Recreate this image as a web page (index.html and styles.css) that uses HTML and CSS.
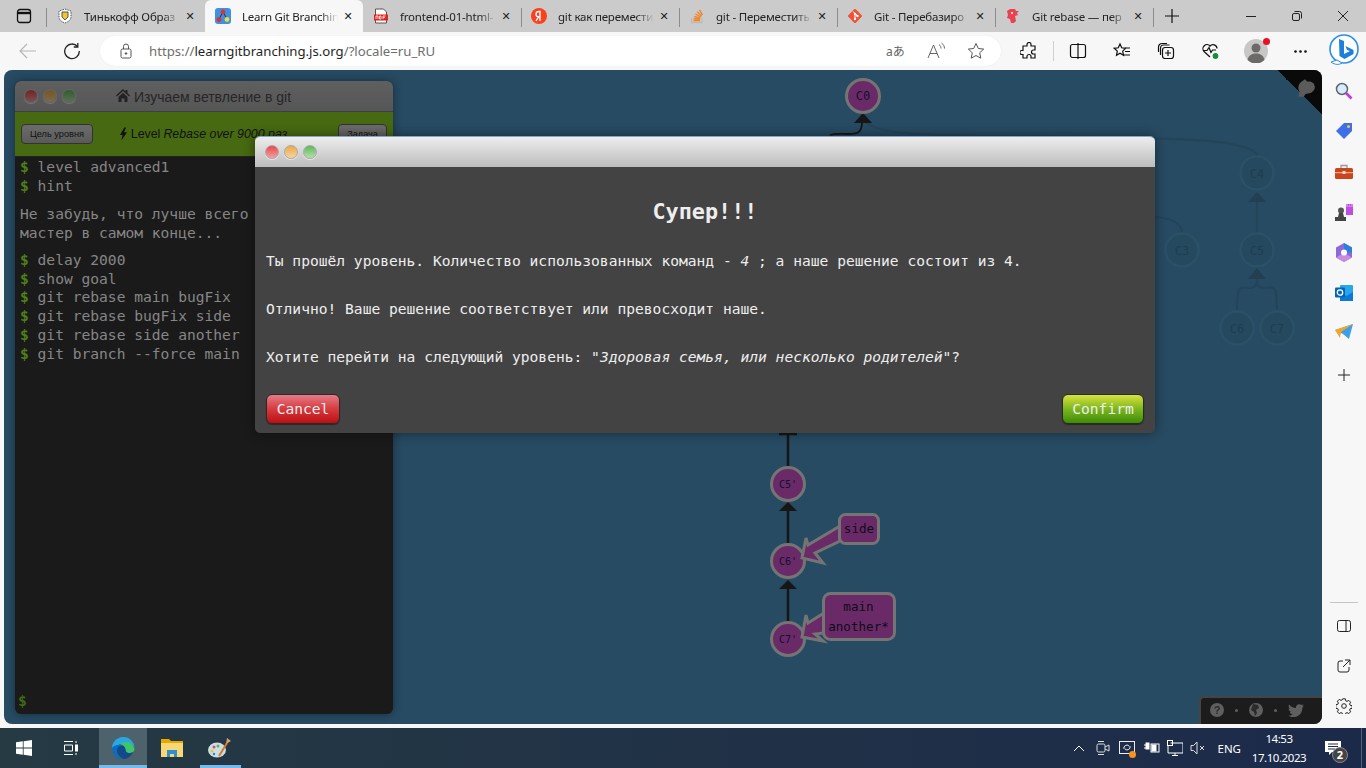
FILE: index.html
```html
<!DOCTYPE html>
<html lang="ru">
<head>
    <meta charset="UTF-8">
    <title>Learn Git Branching</title>
    <link rel="stylesheet" href="styles.css">
</head>
<body>
<div class="tabstrip">
    <div class="tab-actions">
        <svg width="16" height="16" viewBox="0 0 16 16" fill="none" stroke="#111" stroke-width="1.3"><rect x="1.5" y="1.5" width="13" height="13" rx="2.5"/><path d="M1.5 5h13" stroke-width="2.4"/></svg>
    </div>
    <div class="tab">
        <svg class="favicon" viewBox="0 0 16 16"><path d="M8 1l6 2v6c0 3-3 5-6 6-3-1-6-3-6-6V3z" fill="#fff" stroke="#555" stroke-dasharray="1.5 1"/><path d="M5 4h6v5l-3 3-3-3z" fill="#e8c93a" stroke="#333" stroke-width=".8"/></svg>
        <span class="tab-title">Тинькофф Образ</span>
        <span class="tab-close">✕</span>
    </div>
    <div class="tab active">
        <svg class="favicon" viewBox="0 0 16 16"><rect width="16" height="16" rx="3" fill="#3c91e6"/><path d="M8 4L4 11M8 4l4 7" stroke="#234" stroke-width="1"/><circle cx="8" cy="4" r="2.4" fill="#e0302c"/><circle cx="4" cy="11.5" r="2.4" fill="#e0302c"/><circle cx="12" cy="11.5" r="2.4" fill="#f1d93a"/></svg>
        <span class="tab-title">Learn Git Branchin</span>
        <span class="tab-close">✕</span>
    </div>
    <div class="tab">
        <svg class="favicon" viewBox="0 0 16 16"><path d="M2.5 1h8l3 3v11h-11z" fill="#fff" stroke="#555"/><rect x="1" y="6.5" width="14" height="6" fill="#e2231a"/><path d="M3 8h2v3M3 8v3M6.5 8v3h1.5V8zM10 8v3M10 8h2.500M10 9.500h2" stroke="#fff" stroke-width=".8" fill="none"/></svg>
        <span class="tab-title">frontend-01-html-</span>
        <span class="tab-close">✕</span>
        <i class="tab-sep"></i>
    </div>
    <div class="tab">
        <svg class="favicon" viewBox="0 0 16 16"><circle cx="8" cy="8" r="8" fill="#fc3f1d"/><path d="M9 13V3.500H8C6 3.500 5 4.600 5 6.200S6 8.800 8 8.800h1M7.500 8.800L5 13" stroke="#fff" stroke-width="1.400" fill="none"/></svg>
        <span class="tab-title">git как перемести</span>
        <span class="tab-close">✕</span>
        <i class="tab-sep"></i>
    </div>
    <div class="tab">
        <svg class="favicon" viewBox="0 0 16 16"><path d="M2.500 10v4.500h10.500V10" fill="none" stroke="#bcbbbb" stroke-width="1.300"/><path d="M4.500 12.500h6.500M4.700 10.500l6.300.7M5.300 8.300l6 1.800M6.500 6l5.300 3M8.300 3.800l4.300 4.300M10.500 1.800l3 5" stroke="#f48024" stroke-width="1.300"/></svg>
        <span class="tab-title">git - Переместить</span>
        <span class="tab-close">✕</span>
        <i class="tab-sep"></i>
    </div>
    <div class="tab">
        <svg class="favicon" viewBox="0 0 16 16"><rect x="2.700" y="2.700" width="10.600" height="10.600" rx="1.200" transform="rotate(45 8 8)" fill="#f05133"/><path d="M6 3.500l4.500 4.500M8 6v5M8 6l2.500 2" stroke="#fff" stroke-width="1"/><circle cx="8" cy="11" r="1.200" fill="#fff"/><circle cx="10.500" cy="8" r="1.200" fill="#fff"/><circle cx="8" cy="6" r="1.200" fill="#fff"/></svg>
        <span class="tab-title">Git - Перебазиро</span>
        <span class="tab-close">✕</span>
        <i class="tab-sep"></i>
    </div>
    <div class="tab">
        <svg class="favicon" viewBox="0 0 16 16"><path d="M2 3l3-2h5l1 2h3l-2 2 1 2-3 1 1 5-2 2H6l-1-4-3-1 1-3z" fill="#e8434f"/><circle cx="7" cy="5" r="1" fill="#fff"/></svg>
        <span class="tab-title">Git rebase — пер</span>
        <span class="tab-close">✕</span>
        <i class="tab-sep"></i>
    </div>
    <div class="tab-new">
        <svg width="16" height="16" viewBox="0 0 16 16" stroke="#111" stroke-width="1.200"><path d="M8 1v14M1 8h14"/></svg>
    </div>
    <div class="win-buttons">
        <svg width="12" height="12" viewBox="0 0 12 12" stroke="#222"><path d="M1 6.500h10"/></svg>
        <svg width="12" height="12" viewBox="0 0 12 12" stroke="#222" fill="none"><rect x="1.500" y="3.500" width="7" height="7" rx="1.500"/><path d="M3.500 1.500h5a2 2 0 0 1 2 2v5"/></svg>
        <svg width="12" height="12" viewBox="0 0 12 12" stroke="#222"><path d="M1 1l10 10M11 1L1 11"/></svg>
    </div>
</div>

<div class="toolbar">
    <svg class="nav-back" width="18" height="16" viewBox="0 0 18 16" fill="none" stroke="#b5b5b5" stroke-width="1.200"><path d="M17 8H1M8 1L1 8l7 7"/></svg>
    <svg class="nav-reload" width="18" height="18" viewBox="0 0 18 18" fill="none" stroke="#222" stroke-width="1.300"><path d="M14.500 4.500A7.300 7.300 0 1 0 16.300 9"/><path d="M14.800 1v4h-4"/></svg>
    <div class="address">
        <svg class="lock" width="12" height="16" viewBox="0 0 12 16" fill="none" stroke="#555"><rect x="1" y="6" width="10" height="9" rx="1.500"/><path d="M3.500 6V3.500a2.500 2.500 0 0 1 5 0V6"/><circle cx="6" cy="10.500" r=".8" fill="#555"/></svg>
        <span class="url"><span class="url-dim">https://</span>learngitbranching.js.org<span class="url-dim">/?locale=ru_RU</span></span>
        <span class="translate">aあ</span>
        <svg class="read" width="20" height="18" viewBox="0 0 20 18" fill="none" stroke="#666"><path d="M1 16L6.500 3 12 16M3 11.500h7"/><path d="M12 2.500c1.500 1 2 2.500 2 4M14.500 1c2 1.500 3 3.500 3 5.500"/></svg>
        <svg class="star" width="18" height="18" viewBox="0 0 18 18" fill="none" stroke="#555"><path d="M9 1.500l2.300 5 5.400.6-4 3.700 1.100 5.400L9 13.500l-4.800 2.700 1.100-5.400-4-3.700 5.400-.6z"/></svg>
    </div>
    <div class="tool-icons">
        <svg width="18" height="18" viewBox="0 0 18 18" fill="none" stroke="#111" stroke-width="1.200"><path d="M7 2.500a2 2 0 0 1 4 0V4h4v4h-1.500a2 2 0 0 0 0 4H15v4h-4v-1.500a2 2 0 0 0-4 0V16H3v-3.500H1.800a2 2 0 0 1 0-4H3V4h4z"/></svg>
        <i class="tool-sep"></i>
        <svg width="18" height="18" viewBox="0 0 18 18" fill="none" stroke="#111" stroke-width="1.200"><rect x="1.500" y="2.500" width="15" height="13" rx="2"/><path d="M9 1v16"/></svg>
        <svg width="18" height="18" viewBox="0 0 18 18" fill="none" stroke="#111" stroke-width="1.200"><path d="M7 2l1.700 3.800 4 .5-3 2.800.8 4.200L7 11.200 3.500 13.300l.8-4.200-3-2.800 4-.5zM12 6h5M12 9.500h5M11 13h6"/></svg>
        <svg width="18" height="18" viewBox="0 0 18 18" fill="none" stroke="#111" stroke-width="1.200"><rect x="5.500" y="5.500" width="11" height="11" rx="2.500"/><path d="M3.500 13V6a3 3 0 0 1 3-3h6M1.500 10V5a3.500 3.500 0 0 1 3.500-3.500h5M11 8v6M8 11h6"/></svg>
        <svg width="20" height="20" viewBox="0 0 20 20" fill="none" stroke="#111" stroke-width="1.200"><path d="M9 16L3 10.500a4 4 0 0 1 6-5.500 4 4 0 0 1 7 2.500M2 9.500h4l2-3 2 5 1.500-2.500H15"/><circle cx="14.500" cy="15" r="3.500" fill="#1c8a3c" stroke="#fff"/></svg>
        <span class="avatar"><svg width="24" height="24" viewBox="0 0 24 24"><circle cx="12" cy="12" r="12" fill="#c9c7c5"/><circle cx="12" cy="9" r="4.500" fill="#6b6a68"/><path d="M3.500 21c1-5 4.500-6.500 8.500-6.500s7.500 1.500 8.500 6.500a12 12 0 0 1-17 0z" fill="#6b6a68"/></svg><i class="avatar-dot"></i></span>
        <svg width="13" height="3" viewBox="0 0 13 3" fill="#111"><circle cx="1.500" cy="1.500" r="1.300"/><circle cx="6.500" cy="1.500" r="1.300"/><circle cx="11.500" cy="1.500" r="1.300"/></svg>
        <svg class="bing" width="32" height="34" viewBox="0 0 32 34"><circle cx="16" cy="15" r="14" fill="#fff" stroke="#2a8fe8" stroke-width="1.600"/><path d="M3 28c4 3 8 3 11 1l-5-3z" fill="#fff" stroke="#2a8fe8"/><path d="M11 5l5 2v13l6-3-3-1-1.500-4 8 4v4l-9 5-5-3z" fill="#1c7fdc"/></svg>
    </div>
</div>

<div class="main-row">
    <div class="canvas">
        <svg class="graph" width="1318" height="654" viewBox="4 70 1318 654">
            <g class="edges-dim">
                <path d="M866 122c10 10 40 12 80 13 110 2 250 2 280 8 25 5 31 8 31 13"/>
                <path d="M1150 217c22 0 32 6 32 17"/>
                <path d="M1257 233v-32"/>
                <path d="M1237 311c0-30 4-23 12-23 6 0 8-2 8-10 0 8 2 10 8 10 8 0 12-7 12 23" fill="none"/>
            </g>
            <path class="arrow-dim" d="M1257 192l9 10h-18z"/>
            <path class="arrow-dim" d="M1257 268l9 11h-18z"/>
            <g class="node-dim">
                <circle cx="1257" cy="173" r="16.500"/><circle cx="1257" cy="250" r="16.500"/><circle cx="1182" cy="250" r="16.500"/><circle cx="1237" cy="328" r="16.500"/><circle cx="1277" cy="328" r="16.500"/>
            </g>
            <g class="label-dim">
                <text x="1257" y="178">C4</text><text x="1257" y="255">C5</text><text x="1182" y="255">C3</text><text x="1237" y="333">C6</text><text x="1277" y="333">C7</text>
            </g>
            <g class="edges">
                <path class="edge-curve" d="M862 122c0 12-6 12-14 12-8 0-13-1-18 1"/>
                <path d="M788 434v34M788 510v35M788 588v35"/>
                <path class="edge-cap" d="M779 434h18"/>
            </g>
            <path class="arrow" d="M863 113l9 10h-18z"/>
            <path class="arrow" d="M788 502l9 9h-18z"/>
            <path class="arrow" d="M788 580l9 9h-18z"/>
            <g class="node">
                <circle cx="863" cy="96" r="16.500"/><circle cx="788" cy="484" r="16.500"/><circle cx="788" cy="561" r="16.500"/><circle cx="788" cy="639" r="16.500"/>
            </g>
            <g class="label">
                <text x="863" y="100">C0</text><text x="788" y="488">C5'</text><text x="788" y="565">C6'</text><text x="788" y="643">C7'</text>
            </g>
            <path class="branch-arrow" d="M840 526L808 545 806 538 802 558 823 563 815 553 840 541z"/>
            <path class="branch-arrow" d="M824 613L808 623 806 615 802 637 823 641 815 634 824 633z"/>
            <rect class="branch-box" x="839.500" y="514.500" width="39" height="29" rx="6"/>
            <rect class="branch-box" x="823.500" y="593.500" width="71" height="46" rx="7"/>
            <g class="branch-text">
                <text x="859" y="533">side</text><text x="858.500" y="611">main</text><text x="858.500" y="631">another*</text>
            </g>
        </svg>

        <div class="terminal">
            <div class="term-head">
                <span class="lights lights-dim"><i class="light red"></i><i class="light orange"></i><i class="light green"></i></span>
                <span class="term-title">
                    <svg width="14" height="13" viewBox="0 0 14 13" fill="#222"><path d="M7 0L0 6.500l1 1L7 2l6 5.500 1-1-2.500-2.300V1h-2v1.400z"/><path d="M2.500 8L7 3.800 11.500 8v5H8.500V9.500h-3V13h-3z"/></svg>
                    Изучаем ветвление в git
                </span>
            </div>
            <div class="term-level">
                <span class="level-btn">Цель уровня</span>
                <span class="level-name">
                    <svg width="7" height="14" viewBox="0 0 8 15" fill="#111"><path d="M5 0L0 8.500h3L1.500 15 8 5.500H4.500L7 0z"/></svg>
                    Level <em>Rebase over 9000 раз</em>
                </span>
                <span class="level-btn">Задача</span>
            </div>
            <div class="term-body">
                <div class="term-line"><b>$</b> level advanced1</div>
                <div class="term-line"><b>$</b> hint</div>
                <div class="term-note">Не забудь, что лучше всего сдвигать<br>мастер в самом конце...</div>
                <div class="term-line"><b>$</b> delay 2000</div>
                <div class="term-line"><b>$</b> show goal</div>
                <div class="term-line"><b>$</b> git rebase main bugFix</div>
                <div class="term-line"><b>$</b> git rebase bugFix side</div>
                <div class="term-line"><b>$</b> git rebase side another</div>
                <div class="term-line"><b>$</b> git branch --force main</div>
                <div class="term-prompt"><b>$</b></div>
            </div>
        </div>

        <div class="corner">
            <svg width="22" height="22" viewBox="0 0 20 20" fill="#5b5b5b"><path d="M4 18l1-5c-2-3-1-7 2-9l3-2 2 2h3l3 2 1 3c0 3-3 6-7 6l-2 1-1 2z"/></svg>
        </div>

        <div class="modal">
            <div class="modal-head">
                <span class="lights"><i class="light red"></i><i class="light orange"></i><i class="light green"></i></span>
            </div>
            <div class="modal-body">
                <h2>Супер!!!</h2>
                <p>Ты прошёл уровень. Количество использованных команд - <i>4</i> ; а наше решение состоит из 4.</p>
                <p>Отлично! Ваше решение соответствует или превосходит наше.</p>
                <p>Хотите перейти на следующий уровень: <i>"Здоровая семья, или несколько родителей"</i>?</p>
                <div class="modal-actions">
                    <span class="btn btn-cancel">Cancel</span>
                    <span class="btn btn-confirm">Confirm</span>
                </div>
            </div>
        </div>

        <div class="helper">
            <svg width="14" height="14" viewBox="0 0 14 14"><circle cx="7" cy="7" r="7" fill="#5f5f5f"/><text x="7" y="11" class="helper-q">?</text></svg>
            <i class="helper-dot"></i>
            <svg width="14" height="14" viewBox="0 0 14 14"><circle cx="7" cy="7" r="7" fill="#5f5f5f"/><path d="M4 1l5 1 1 3-3 2 1 3-2 3-1-4-3-2z" fill="#2b2b2b"/></svg>
            <i class="helper-dot"></i>
            <svg width="16" height="13" viewBox="0 0 16 13" fill="#5f5f5f"><path d="M16 1.500l-1.800.5 1.300-1.700-2 .8a3.300 3.300 0 0 0-5.500 3C5.200 4 2.800 2.700 1.100.6c-.9 1.500-.4 3.400 1 4.400l-1.500-.4c0 1.600 1.100 3 2.600 3.300l-1.500.1c.4 1.300 1.600 2.200 3 2.300A6.600 6.600 0 0 1 0 11.600 9.300 9.300 0 0 0 14.400 3.400z"/></svg>
        </div>
    </div>

    <div class="sidebar">
        <div class="side-top">
            <svg width="18" height="18" viewBox="0 0 18 18"><circle cx="7" cy="7" r="5.500" fill="#d6ecfa" stroke="#5c6670" stroke-width="1.500"/><path d="M11 11l5.500 5.500" stroke="#c238d8" stroke-width="2.600"/></svg>
            <svg width="18" height="18" viewBox="0 0 18 18"><path d="M9 1h8v8l-8 8-8-8z" fill="#3f6fe8"/><circle cx="13.500" cy="4.500" r="1.500" fill="#f2c83a"/></svg>
            <svg width="18" height="16" viewBox="0 0 18 16"><path d="M6 4V1.500h6V4" fill="none" stroke="#999" stroke-width="1.300"/><rect y="4" width="18" height="11" rx="1.500" fill="#c9461c"/><rect y="8" width="18" height="1.300" fill="#f0a080"/><rect x="7.500" y="7" width="3" height="3" fill="#ddd"/></svg>
            <svg width="18" height="18" viewBox="0 0 18 18"><rect x="11" y="1" width="7" height="11" fill="#c04ce8"/><path d="M11 1h2v2h1V1h1v2h1V1h2v3h-7z" fill="#d77cf2"/><circle cx="6" cy="7.500" r="3" fill="#555"/><path d="M4 10h4l1 4h2v4H0v-4h3z" fill="#444"/></svg>
            <svg width="18" height="19" viewBox="0 0 18 19"><path d="M9 0l8 4.500v10L9 19l-8-4.500v-10z" fill="#8a6ad8"/><path d="M9 0l8 4.500v5H9z" fill="#2b7fd8"/><path d="M1 14.500L9 10l8 4.500L9 19z" fill="#c98ae0"/><circle cx="9" cy="9.500" r="3" fill="#fff"/></svg>
            <svg width="18" height="18" viewBox="0 0 18 18"><rect x="5" y="1" width="13" height="16" rx="1" fill="#28a8ea"/><path d="M5 8l6.500 4L18 8v9H5z" fill="#0f78d4"/><rect y="3.500" width="10" height="10" rx="1" fill="#0364b8"/><circle cx="5" cy="8.500" r="2.700" fill="none" stroke="#fff" stroke-width="1.300"/></svg>
            <svg class="side-send" width="18" height="15" viewBox="0 0 18 15"><path d="M0 6l18-6-4 15-6-5z" fill="#3c9fe8"/><path d="M0 6l18-6L6 8l-1 6z" fill="#f0a52b"/></svg>
            <svg class="side-plus" width="12" height="12" viewBox="0 0 12 12" stroke="#222"><path d="M6 0v12M0 6h12"/></svg>
        </div>
        <div class="side-bottom">
            <i class="side-sep"></i>
            <svg class="side-split" width="14" height="12" viewBox="0 0 14 12" fill="none" stroke="#222"><rect x=".5" y=".5" width="13" height="11" rx="2"/><path d="M9 .5v11"/></svg>
            <svg width="14" height="14" viewBox="0 0 14 14" fill="none" stroke="#222"><path d="M6 2H3a2 2 0 0 0-2 2v7a2 2 0 0 0 2 2h7a2 2 0 0 0 2-2V8M8 1h5v5M13 1L6 8"/></svg>
            <svg width="16" height="16" viewBox="0 0 16 16" fill="none" stroke="#222"><circle cx="8" cy="8" r="2.300"/><path d="M6.700 .8h2.600l.4 2 1.300.6 1.800-1 1.800 1.800-1 1.800.6 1.300 2 .4v2.600l-2 .4-.6 1.300 1 1.800-1.800 1.800-1.800-1-1.300.6-.4 2H6.700l-.4-2-1.300-.6-1.800 1-1.800-1.800 1-1.800-.6-1.300-2-.4V6.700l2-.4.6-1.300-1-1.800 1.800-1.800 1.800 1 1.300-.6z"/></svg>
        </div>
    </div>
</div>

<div class="taskbar">
    <div class="task-left">
        <span class="task-item"><svg width="16" height="16" viewBox="0 0 16 16" fill="#fff"><path d="M0 2.300l6.800-1v6.300H0zM7.600 1.200L16 0v7.600H7.600zM0 8.400h6.800v6.300l-6.800-1zM7.600 8.400H16V16l-8.400-1.200z"/></svg></span>
        <span class="task-item task-view"><svg width="16" height="16" viewBox="0 0 16 16" fill="none" stroke="#fff"><path d="M1 1.500h9M1 14.500h9M1.500 5h8v6h-8zM13 1v2M13 13v2"/><rect x="12.500" y="5" width="2" height="6" fill="#fff"/></svg></span>
        <span class="task-item edge"><svg width="24" height="24" viewBox="0 0 24 24"><path d="M1 12A11.500 11.500 0 0 1 23.500 13c0 3-3 4.500-6 4-3-.5-3-2-3-3 0-3-3-5-6.500-5S1 11 1 12z" fill="#3ec46d"/><path d="M1 12c0-2 3-4 7-4 2 0 4 1 5 2.500-3-1-7 1-7 5 0 4 4 8 7 8.500C6 24 1 19 1 12z" fill="#0f6cbd"/><path d="M13 10.500c1 1 1.500 2.500 1.500 3.500 0 1 .5 2.500 3 3 1.500 .5 3 0 4.500-1-2 5-7 7.500-9 7-3-.5-7-4.500-7-8.500 0-4 4-6 7.500-4z" fill="#114a8b"/><path d="M12 1A11 11 0 0 1 23.500 13c0-4-4-7-8-7-4 0-7 2-8 3-1.500 0-4 0-6.500 3C1 6 6 1 12 1z" fill="#2aa6e0"/></svg></span>
        <span class="task-item folder"><svg width="22" height="20" viewBox="0 0 22 20"><path d="M0 1h8l2 2h12v16H0z" fill="#e8a800"/><path d="M0 5h22v14H0z" fill="#f8d775"/><path d="M6 19v-7h10v7h-3v-3H9v3z" fill="#2f8fd0"/></svg></span>
        <span class="task-item paint"><svg width="24" height="22" viewBox="0 0 24 22"><ellipse cx="9" cy="13" rx="9" ry="7.500" fill="#c9dfe8"/><circle cx="6" cy="10" r="1.500" fill="#d9534f"/><circle cx="10" cy="9" r="1.500" fill="#6ab04c"/><circle cx="4" cy="14" r="1.500" fill="#f0c419"/><circle cx="6" cy="17" r="1.200" fill="#3c78d8"/><path d="M11 19L19 6" stroke="#d97b1f" stroke-width="2"/><path d="M18 7l1-6 4 3z" fill="#d9a066"/></svg></span>
    </div>
    <div class="tray">
        <svg width="12" height="8" viewBox="0 0 12 8" fill="none" stroke="#fff"><path d="M1 7l5-5 5 5"/></svg>
        <svg class="tray-cam" width="14" height="18" viewBox="0 0 14 18" fill="none" stroke="#ddd"><rect x="1" y="5" width="8" height="8" rx="1.500"/><path d="M9 8l4-2v6l-4-2M2 2.500h6M2 15.500h6"/></svg>
        <span class="tray-update"><svg width="16" height="15" viewBox="0 0 16 15" fill="none" stroke="#eee"><rect x=".5" y=".5" width="15" height="12"/><path d="M5 8a3 3 0 0 1 5-3M11 5a3 3 0 0 1-5 3"/></svg><i class="tray-dot"></i></span>
        <svg width="16" height="12" viewBox="0 0 16 12" fill="none" stroke="#fff"><path d="M0 3h2M0 6h2"/><rect x="2" y="1" width="3" height="6" fill="#fff"/><rect x="7" y="2" width="8" height="8"/><rect x="8" y="3" width="4" height="6" fill="#fff"/></svg>
        <svg class="tray-net" width="16" height="16" viewBox="0 0 16 16" fill="none" stroke="#fff"><path d="M3.500 3H16v10H1V6M8 13v2.500M5 15.500h6"/><rect x=".5" y=".5" width="5" height="5"/></svg>
        <svg class="tray-net" width="15" height="14" viewBox="0 0 15 14" fill="none" stroke="#ddd"><path d="M1 4.500h2.500L7 1v12L3.500 9.500H1zM10 5l4 4M14 5l-4 4"/></svg>
        <span class="tray-lang">ENG</span>
        <span class="tray-clock"><span>14:53</span><span>17.10.2023</span></span>
        <span class="tray-notify">
            <svg width="16" height="15" viewBox="0 0 16 15"><path d="M0 0h16v11H7l-3 3v-3H0z" fill="#fff"/><path d="M3 3h10M3 5.500h10M3 8h7" stroke="#1c2a4a"/></svg>
            <i class="notify-count">2</i>
        </span>
    </div>
</div>
</body>
</html>
```

FILE: styles.css
```css
* {
    box-sizing: border-box;
}

html, body {
    margin: 0;
    height: 100%;
    overflow: hidden;
}

body {
    display: flex;
    flex-direction: column;
    background: #f7f7f7;
    font-family: "Noto Sans", "Open Sans", sans-serif;
}

/* tab strip */
.tabstrip {
    height: 32px;
    display: flex;
    align-items: stretch;
    background: #cbcbcb;
    flex: none;
}

.tab-actions {
    width: 47px;
    display: flex;
    align-items: center;
    padding-left: 16px;
    position: relative;
}

.tab-actions::after {
    content: "";
    position: absolute;
    right: 0;
    top: 8px;
    height: 19px;
    width: 1px;
    background: #8c8c8c;
}

.tab {
    width: 158px;
    display: flex;
    align-items: center;
    padding: 0 7px 0 10px;
    position: relative;
    font-size: 11.500px;
    letter-spacing: -0.2px;
    color: #222;
}

.tab.active {
    background: #f7f7f7;
    border-radius: 6px 6px 0 0;
}

.favicon {
    width: 16px;
    height: 16px;
    flex: none;
    margin-right: 11px;
}

.tab-title {
    flex: 1;
    overflow: hidden;
    white-space: nowrap;
    -webkit-mask-image: linear-gradient(to right, #000 82%, transparent 100%);
    mask-image: linear-gradient(to right, #000 82%, transparent 100%);
}

.tab-close {
    width: 16px;
    margin-left: 2px;
    text-align: center;
    font-size: 11px;
    color: #222;
    font-family: "DejaVu Sans", sans-serif;
}

.tab-sep {
    position: absolute;
    left: 0;
    top: 8px;
    height: 19px;
    width: 1px;
    background: #8c8c8c;
}

.tab:nth-child(4) .tab-sep {
    display: none;
}

.tab-new {
    width: 38px;
    display: flex;
    align-items: center;
    justify-content: center;
    position: relative;
}

.tab-new::before {
    content: "";
    position: absolute;
    left: 0;
    top: 8px;
    height: 19px;
    width: 1px;
    background: #8c8c8c;
}

.win-buttons {
    flex: 1;
    display: flex;
    align-items: center;
    justify-content: flex-end;
    gap: 34px;
    padding-right: 17px;
}

/* toolbar */
.toolbar {
    height: 38px;
    flex: none;
    display: flex;
    align-items: center;
    background: #f7f7f7;
    padding-left: 19px;
}

.nav-reload {
    margin-left: 26px;
}

.address {
    width: 901px;
    height: 30px;
    flex: none;
    margin-left: 19px;
    border-radius: 15px;
    background: #fff;
    display: flex;
    align-items: center;
    padding: 0 16px 0 20px;
    box-shadow: 0 0 1px #ddd;
}

.url {
    margin-left: 17px;
    flex: 1;
    font-size: 13.200px;
    color: #1f1f1f;
}

.url-dim {
    color: #6d6d6d;
}

.translate {
    font-size: 12px;
    color: #666;
    width: 20px;
    white-space: nowrap;
    font-family: "Noto Sans", "Noto Sans CJK JP", sans-serif;
}

.read {
    margin-left: 21px;
}

.star {
    margin-left: 20px;
}

.tool-icons {
    flex: 1;
    display: flex;
    align-items: center;
    gap: 26px;
    padding-left: 19px;
}

.tool-sep {
    width: 1px;
    height: 20px;
    background: #d0d0d0;
    margin: 0 -11px;
}

.avatar {
    position: relative;
    display: flex;
    margin-left: -3px;
}

.avatar-dot {
    position: absolute;
    top: -1px;
    right: -2px;
    width: 7px;
    height: 7px;
    border-radius: 50%;
    background: #e81123;
}

.bing {
    margin-left: -5px;
}

/* page area */
.main-row {
    flex: 1;
    display: flex;
    min-height: 0;
    padding-left: 4px;
}

.canvas {
    width: 1318px;
    height: 654px;
    flex: none;
    position: relative;
    overflow: hidden;
    background: #274b63;
    border-radius: 8px;
}

.graph {
    position: absolute;
    left: 0;
    top: 0;
}

.edges path {
    stroke: #161616;
    stroke-width: 2.500;
    fill: none;
}

.edges .edge-curve {
    stroke-width: 1.800;
}

.edges-dim path {
    stroke: #244559;
    stroke-width: 2.200;
    fill: none;
}

.arrow {
    fill: #161616;
}

.arrow-dim {
    fill: #233f52;
}

.node circle {
    fill: #6a2a68;
    stroke: #747474;
    stroke-width: 3;
}

.node-dim circle {
    fill: #25495e;
    stroke: #2b5166;
    stroke-width: 2.500;
}

.label text {
    font: 10px "DejaVu Sans Mono", monospace;
    text-anchor: middle;
    fill: #101030;
}

.label text:first-child {
    font-size: 12px;
}

.label-dim text {
    font: 12px "DejaVu Sans Mono", monospace;
    text-anchor: middle;
    fill: #1f3d50;
}

.branch-arrow {
    fill: #6a2a68;
    stroke: #747474;
    stroke-width: 3;
}

.branch-box {
    fill: #6a2a68;
    stroke: #747474;
    stroke-width: 3;
}

.branch-text text {
    font: 12.600px "DejaVu Sans Mono", monospace;
    text-anchor: middle;
    fill: #0d0d1a;
}

/* command line window */
.terminal {
    position: absolute;
    left: 11px;
    top: 11px;
    width: 378px;
    height: 633px;
    border-radius: 6px;
    overflow: hidden;
    background: #1a1a1a;
    box-shadow: 0 0 10px rgba(0, 0, 0, 0.4);
    display: flex;
    flex-direction: column;
}

.term-head {
    height: 31px;
    flex: none;
    display: flex;
    align-items: center;
    padding-left: 9px;
    background: linear-gradient(#5f5f5f, #565656);
    border-bottom: 1px solid #3c4048;
}

.lights {
    display: flex;
    gap: 5px;
}

.light {
    width: 14px;
    height: 14px;
    border-radius: 50%;
    border: 1px solid #aaa;
    box-shadow: 0 1px 1px rgba(255, 255, 255, 0.6);
}

.light.red {
    background: linear-gradient(#e8484c, #f4a0a0);
}

.light.orange {
    background: linear-gradient(#eca949, #f6d49c);
}

.light.green {
    background: linear-gradient(#5fb85a, #b4e0ac);
}

.lights-dim .light {
    border-color: #666;
    box-shadow: 0 1px 1px rgba(255, 255, 255, 0.2);
}

.lights-dim .light.red {
    background: linear-gradient(#702426, #7a4f50);
}

.lights-dim .light.orange {
    background: linear-gradient(#775526, #7c6a4e);
}

.lights-dim .light.green {
    background: linear-gradient(#305d2d, #5a7056);
}

.term-title {
    margin-left: 40px;
    font: 14px "Liberation Sans", Arial, sans-serif;
    color: #262626;
    flex: 1;
    padding-top: 1px;
}

.term-level {
    height: 45px;
    flex: none;
    background: #476911;
    display: flex;
    align-items: center;
    justify-content: space-between;
    padding: 0 6px;
    border-bottom: 1px solid #222;
}

.level-btn {
    height: 20px;
    padding: 0 8px;
    display: flex;
    align-items: center;
    border: 1px solid #333;
    border-radius: 4px;
    background: linear-gradient(#6c6c6c, #5a5a5a);
    font: 9.200px "Liberation Sans", Arial, sans-serif;
    color: #111;
}

.level-name {
    font: 12.400px "Liberation Sans", Arial, sans-serif;
    color: #111;
    display: flex;
    align-items: center;
    gap: 4px;
    margin-right: 24px;
}

.level-name em {
    margin-left: -1px;
}

.term-body {
    flex: 1;
    padding: 1px 5px 0;
    font: 14.600px/18.900px "DejaVu Sans Mono", monospace;
    color: #868686;
    white-space: nowrap;
    position: relative;
}

.term-body b {
    color: #4f8016;
}

.term-note {
    margin: 9px 0 8px;
}

.term-prompt {
    position: absolute;
    left: 3px;
    bottom: 3px;
}

.term-prompt b {
    color: #3f6a14;
}

.corner {
    position: absolute;
    top: 0;
    right: 0;
    width: 45px;
    height: 45px;
    background: linear-gradient(to top right, transparent 50%, #0a0a0a 50%);
    display: flex;
    justify-content: flex-end;
    padding: 7px 6px 0 0;
}

/* dialog */
.modal {
    position: absolute;
    left: 251px;
    top: 66px;
    width: 900px;
    height: 297px;
    border-radius: 5px;
    overflow: hidden;
    box-shadow: 0 0 12px rgba(0, 0, 0, 0.45);
    display: flex;
    flex-direction: column;
    border-top: 1px solid #7fa4c4;
}

.modal-head {
    height: 30px;
    flex: none;
    display: flex;
    align-items: center;
    padding-left: 10px;
    background: linear-gradient(#ededed, #bcbcbc);
}

.modal-body {
    flex: 1;
    background: #434343;
    padding: 0 11px;
    color: #eeeeee;
    font: 14.600px/20px "DejaVu Sans Mono", monospace;
    white-space: nowrap;
}

.modal-body h2 {
    margin: 30px 0 0;
    font: bold 21.800px/30px "DejaVu Sans Mono", monospace;
    text-align: center;
}

.modal-body p {
    margin: 0;
    padding-top: 28px;
}

.modal-body h2 + p {
    padding-top: 24px;
}

.modal-actions {
    margin-top: 27px;
    display: flex;
    justify-content: space-between;
}

.btn {
    height: 30px;
    display: flex;
    align-items: center;
    justify-content: center;
    border-radius: 6px;
    border: 1px solid #2a2a2a;
    box-shadow: 0 1px 1px rgba(0, 0, 0, 0.4);
    color: #eee;
}

.btn-cancel {
    width: 74px;
    background: linear-gradient(#e47c85, #d63a3f 50%, #bd0f12);
}

.btn-confirm {
    width: 82px;
    background: linear-gradient(#d7e23c, #7cb61e 50%, #3f8d06);
}

/* little links at the bottom right */
.helper {
    position: absolute;
    right: 0;
    bottom: 0;
    width: 123px;
    height: 28px;
    background: #1c1c1c;
    border-top: 2px solid #444;
    border-left: 2px solid #444;
    border-radius: 5px 0 0 0;
    display: flex;
    align-items: center;
    padding-left: 9px;
    padding-bottom: 2px;
    gap: 11px;
}

.helper-q {
    font: bold 11px "Liberation Sans", sans-serif;
    text-anchor: middle;
    fill: #2b2b2b;
}

.helper-dot {
    width: 3px;
    height: 3px;
    border-radius: 50%;
    background: #5f5f5f;
}

/* right side panel */
.sidebar {
    flex: 1;
    height: 654px;
    display: flex;
    flex-direction: column;
    justify-content: space-between;
    align-items: center;
}

.side-top {
    display: grid;
    grid-auto-rows: 40.300px;
    align-items: center;
    justify-items: center;
    padding-top: 1px;
}

.side-send {
    margin-top: -3px;
}

.side-plus {
    margin-top: 3px;
}

.side-bottom {
    display: flex;
    flex-direction: column;
    align-items: center;
    gap: 25px;
    padding-bottom: 10px;
}

.side-sep {
    width: 28px;
    height: 1px;
    background: #c4c4c4;
    margin-bottom: -8px;
}

.side-split {
    margin-bottom: 2px;
}

/* windows taskbar */
.taskbar {
    height: 40px;
    flex: none;
    display: flex;
    justify-content: space-between;
    margin-top: 4px;
    background: linear-gradient(to right, #253a43, #1c2a4a);
    color: #fff;
}

.task-left {
    display: flex;
}

.task-item {
    width: 48px;
    display: flex;
    align-items: center;
    justify-content: center;
    border-bottom: 3px solid transparent;
    padding-top: 3px;
}

.task-item.task-view {
    width: 51px;
    padding-right: 5px;
}

.task-item.edge {
    background: #4d626a;
    border-bottom-color: #76b9ed;
}

.task-item.folder {
    margin-left: 1px;
}

.task-item.paint {
    position: relative;
}

.task-item.paint::after {
    content: "";
    position: absolute;
    left: 4px;
    right: 3px;
    bottom: -3px;
    height: 3px;
    background: #76b9ed;
}

.tray {
    display: flex;
    align-items: center;
    gap: 9px;
    padding-right: 25px;
    position: relative;
}

.tray::after {
    content: "";
    position: absolute;
    right: 4px;
    top: 0;
    bottom: 0;
    width: 1px;
    background: #55617a;
}

.tray-cam {
    margin-left: 2px;
}

.tray-update {
    position: relative;
    display: flex;
}

.tray-dot {
    position: absolute;
    right: -1px;
    bottom: -2px;
    width: 7px;
    height: 7px;
    border-radius: 50%;
    background: #f7931e;
}

.tray-net {
    margin-left: -2px;
}

.tray-lang {
    font-size: 11.500px;
    margin-left: 3px;
}

.tray-clock {
    display: flex;
    flex-direction: column;
    align-items: center;
    font-size: 11.500px;
    letter-spacing: -0.45px;
    line-height: 19px;
    width: 56px;
    margin-left: 1px;
}

.tray-notify {
    position: relative;
    margin-left: 9px;
    display: flex;
}

.notify-count {
    position: absolute;
    right: -7px;
    bottom: -7px;
    width: 16px;
    height: 16px;
    border-radius: 50%;
    background: #444;
    border: 1px solid #888;
    font: bold 11px/14px "Noto Sans", sans-serif;
    text-align: center;
}
```
